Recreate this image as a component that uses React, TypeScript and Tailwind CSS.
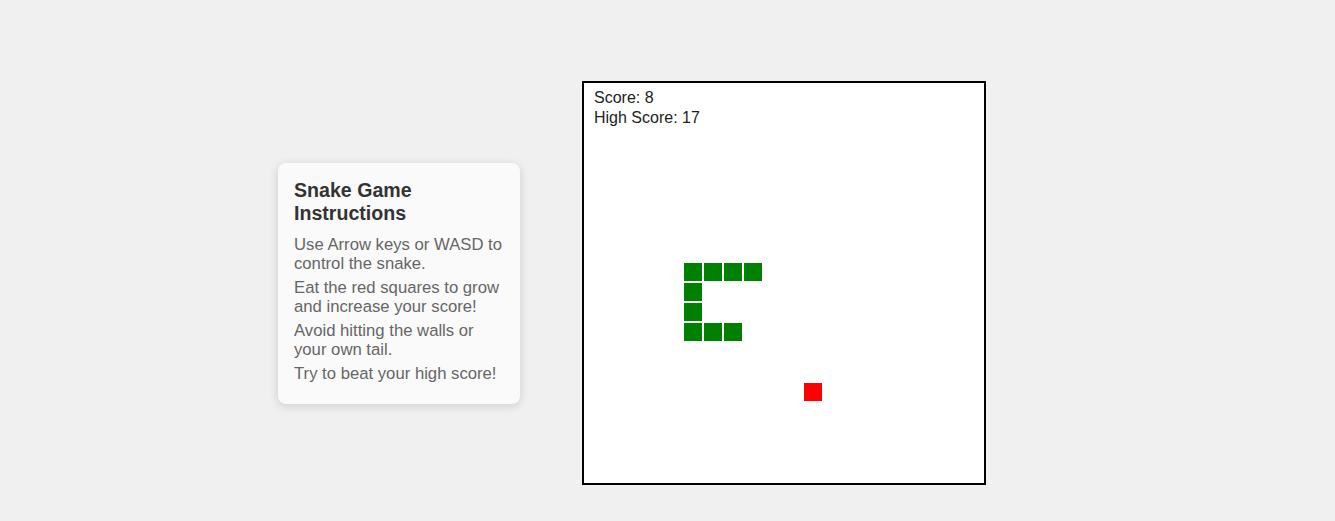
const CELL = 20;

const snake: [number, number][] = [
  [8, 9],
  [7, 9],
  [6, 9],
  [5, 9],
  [5, 10],
  [5, 11],
  [5, 12],
  [6, 12],
  [7, 12],
];

const food: [number, number] = [11, 15];

function Instructions() {
  return (
    <div className="w-[242px] rounded-lg bg-[#fafafa] px-4 pt-4 pb-[21px] shadow-[0_2px_10px_rgba(0,0,0,0.15)]">
      <h2 className="text-[19.6px] leading-[23px] font-bold text-[#333]">
        Snake Game Instructions
      </h2>
      <div className="mt-[10px] flex flex-col gap-[5px] text-[16.7px] leading-[19px] text-[#666]">
        <p>Use Arrow keys or WASD to control the snake.</p>
        <p>Eat the red squares to grow and increase your score!</p>
        <p>Avoid hitting the walls or your own tail.</p>
        <p>Try to beat your high score!</p>
      </div>
    </div>
  );
}

function Board() {
  return (
    <div className="relative h-[404px] w-[404px] border-2 border-black bg-white">
      <div className="absolute top-[5px] left-[10px] text-[16px] leading-[19.5px] text-[#222]">
        <div>Score: 8</div>
        <div>High Score: 17</div>
      </div>
      {snake.map(([x, y], i) => (
        <div
          key={i}
          className="absolute h-[18px] w-[18px] bg-[#008000]"
          style={{ left: x * CELL, top: y * CELL }}
        />
      ))}
      <div
        className="absolute h-[18px] w-[18px] bg-[#ff0000]"
        style={{ left: food[0] * CELL, top: food[1] * CELL }}
      />
    </div>
  );
}

export default function App() {
  return (
    <div
      className="flex min-h-[521px] items-center gap-[62px] bg-[#f0f0f0] pt-[81px] pb-[36px] pl-[278px]"
      style={{ fontFamily: '"Liberation Sans", Arial, sans-serif' }}
    >
      <Instructions />
      <Board />
    </div>
  );
}
